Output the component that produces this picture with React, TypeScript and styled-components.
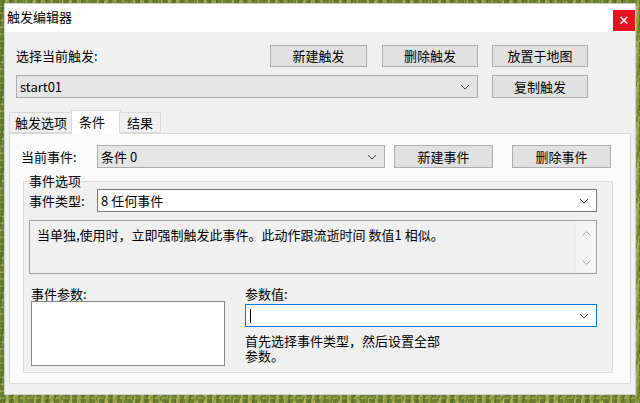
import React from 'react';
import styled, { createGlobalStyle } from 'styled-components';

const GlobalStyle = createGlobalStyle`
  html, body {
    margin: 0;
    padding: 0;
  }
  body {
    width: 640px;
    height: 403px;
    overflow: hidden;
    font-family: "Noto Sans CJK SC", "Liberation Sans", sans-serif;
    font-size: 13px;
    color: #000;
    background-color: #84933a;
    background-image:
      radial-gradient(circle at 20% 30%, rgba(70, 95, 25, 0.55) 0 3px, transparent 4px),
      radial-gradient(circle at 70% 80%, rgba(190, 195, 100, 0.6) 0 2px, transparent 3px),
      repeating-linear-gradient(100deg, #8f9c46 0 3px, #728530 3px 5px, #a5ab5e 5px 7px);
    background-size: 9px 7px, 11px 9px, auto;
  }
`;

const Desktop = styled.div`
  padding: 3px 4px 8px 4px;
`;

const Window = styled.div`
  width: 632px;
  height: 392px;
  display: flex;
  flex-direction: column;
  background: #f0f0f0;
  border: 1px solid #cfcfcf;
  box-sizing: border-box;
`;

const TitleBar = styled.div`
  height: 28px;
  display: flex;
  align-items: center;
  justify-content: space-between;
  background: #ffffff;
  padding-left: 2px;
`;

const Title = styled.span`
  line-height: 16px;
  margin-top: -2px;
`;

const CloseButton = styled.div`
  width: 22px;
  height: 21px;
  margin-top: 6px;
  align-self: flex-start;
  background: #e81123;
  color: #fff;
  display: flex;
  align-items: center;
  justify-content: center;
  font-family: "DejaVu Sans", sans-serif;
  font-size: 13px;
  font-weight: bold;
`;

const Body = styled.div`
  flex: 1;
  padding: 13px 5px 0 3px;
`;

const TopGrid = styled.div`
  display: grid;
  grid-template-columns: 462px 96px;
  column-gap: 14px;
  row-gap: 8px;
  margin-left: 8px;
`;

const LabelRow = styled.div`
  display: flex;
  align-items: center;
  gap: 15px;
`;

const Label = styled.span<{ $w?: number; $grow?: boolean }>`
  line-height: 16px;
  white-space: nowrap;
  flex: ${p => (p.$grow ? 1 : 'none')};
  ${p => (p.$w ? `width: ${p.$w}px;` : '')}
`;

const Button = styled.div<{ $w: number; $h?: number }>`
  width: ${p => p.$w}px;
  height: ${p => p.$h ?? 22}px;
  box-sizing: border-box;
  flex: none;
  display: flex;
  align-items: center;
  justify-content: center;
  background: #e1e1e1;
  border: 1px solid #adadad;
  line-height: 16px;
`;

type ComboKind = 'gray' | 'white' | 'focus';

const ComboBox = styled.div<{ $w?: number; $kind: ComboKind }>`
  ${p => (p.$w ? `width: ${p.$w}px;` : '')}
  height: 23px;
  box-sizing: border-box;
  flex: none;
  display: flex;
  align-items: center;
  padding: 0 7px 0 3px;
  background: ${p => (p.$kind === 'gray' ? '#e5e5e5' : '#ffffff')};
  border: 1px solid
    ${p => (p.$kind === 'gray' ? '#acacac' : p.$kind === 'focus' ? '#0078d7' : '#7a7a7a')};
  line-height: 16px;
`;

const ComboText = styled.span`
  flex: 1;
  white-space: nowrap;
`;

const Caret = styled.span`
  width: 1px;
  height: 14px;
  background: #000;
  margin-left: 1px;
`;

const TabStrip = styled.div`
  display: flex;
  align-items: flex-end;
  margin: 12px 0 0 1px;
  height: 23px;
  position: relative;
  z-index: 1;
`;

const Tab = styled.div<{ $w: number; $active?: boolean }>`
  width: ${p => p.$w}px;
  box-sizing: border-box;
  height: ${p => (p.$active ? 24 : 21)}px;
  margin-bottom: ${p => (p.$active ? -1 : 0)}px;
  ${p => (p.$active ? 'margin-left: -2px; margin-right: -2px; padding-right: 8px;' : '')}
  background: ${p => (p.$active ? '#ffffff' : '#f0f0f0')};
  border: 1px solid #d9d9d9;
  border-bottom: ${p => (p.$active ? 'none' : '1px solid #d9d9d9')};
  display: flex;
  align-items: ${p => (p.$active ? 'flex-start' : 'center')};
  padding-top: ${p => (p.$active ? 3 : 1)}px;
  justify-content: center;
  line-height: 16px;
`;

const TabPanel = styled.div`
  margin-left: 1px;
  width: 622px;
  height: 251px;
  box-sizing: border-box;
  background: #fbfbfb;
  border: 1px solid #d9d9d9;
  padding: 11px 11px 0 11px;
`;

const EventRow = styled.div`
  display: flex;
  align-items: center;
`;

const GroupBox = styled.fieldset`
  margin: 5px 0 0 2px;
  width: 590px;
  height: 200px;
  box-sizing: border-box;
  border: 1px solid #dcdcdc;
  background: #f0f0f0;
  padding: 0 15px 0 5px;
`;

const Legend = styled.legend`
  padding: 0;
  line-height: 16px;
`;

const TypeRow = styled.div`
  display: flex;
  align-items: center;
`;

const Description = styled.div`
  margin-top: 8px;
  height: 54px;
  box-sizing: border-box;
  border: 1px solid #a0a0a0;
  background: #f0f0f0;
  display: flex;
`;

const DescText = styled.div`
  flex: 1;
  padding: 6px 0 0 7px;
  line-height: 16px;
`;

const ScrollTrack = styled.div`
  width: 20px;
  display: flex;
  flex-direction: column;
  justify-content: space-between;
  align-items: center;
  padding: 10px 0 8px;
  background: #f4f4f4;
  border-left: 1px solid #ececec;
`;

const ParamGrid = styled.div`
  display: grid;
  grid-template-columns: 194px 352px;
  column-gap: 20px;
  align-items: start;
  margin: 12px 0 0 2px;
`;

const Column = styled.div`
  display: flex;
  flex-direction: column;
`;

const ListBox = styled.div`
  margin-top: -1px;
  height: 65px;
  box-sizing: border-box;
  background: #ffffff;
  border: 1px solid #828790;
`;

const Help = styled.div`
  margin-top: 6px;
  max-width: 205px;
  line-height: 15px;
`;

const Chevron = ({ color = '#444' }: { color?: string }) => (
  <svg width="10" height="6" viewBox="0 0 10 6">
    <path d="M1 1 L5 5 L9 1" fill="none" stroke={color} strokeWidth="1" />
  </svg>
);

const ArrowUp = () => (
  <svg width="9" height="5" viewBox="0 0 9 5">
    <path d="M0.5 4.5 L4.5 0.5 L8.5 4.5" fill="none" stroke="#a3a3a3" strokeWidth="1" />
  </svg>
);

const ArrowDown = () => (
  <svg width="9" height="5" viewBox="0 0 9 5">
    <path d="M0.5 0.5 L4.5 4.5 L8.5 0.5" fill="none" stroke="#a3a3a3" strokeWidth="1" />
  </svg>
);

export default function App() {
  return (
    <>
      <GlobalStyle />
      <Desktop>
        <Window>
          <TitleBar>
            <Title>触发编辑器</Title>
            <CloseButton>✕</CloseButton>
          </TitleBar>
          <Body>
            <TopGrid>
              <LabelRow>
                <Label $grow>选择当前触发:</Label>
                <Button $w={97}>新建触发</Button>
                <Button $w={96}>删除触发</Button>
              </LabelRow>
              <Button $w={96}>放置于地图</Button>
              <ComboBox $kind="gray">
                <ComboText>start01</ComboText>
                <Chevron />
              </ComboBox>
              <Button $w={96} $h={23}>复制触发</Button>
            </TopGrid>

            <TabStrip>
              <Tab $w={64}>触发选项</Tab>
              <Tab $w={50} $active>条件</Tab>
              <Tab $w={42}>结果</Tab>
            </TabStrip>
            <TabPanel>
              <EventRow>
                <Label $w={76}>当前事件:</Label>
                <ComboBox $kind="gray" $w={288}>
                  <ComboText>条件 0</ComboText>
                  <Chevron />
                </ComboBox>
                <Button $w={99} $h={23} style={{ marginLeft: 9 }}>新建事件</Button>
                <Button $w={99} $h={23} style={{ marginLeft: 19 }}>删除事件</Button>
              </EventRow>

              <GroupBox>
                <Legend>事件选项</Legend>
                <TypeRow>
                  <Label $w={68}>事件类型:</Label>
                  <ComboBox $kind="white" $w={500}>
                    <ComboText>8 任何事件</ComboText>
                    <Chevron />
                  </ComboBox>
                </TypeRow>
                <Description>
                  <DescText>当单独,使用时，立即强制触发此事件。此动作跟流逝时间 数值1 相似。</DescText>
                  <ScrollTrack>
                    <ArrowUp />
                    <ArrowDown />
                  </ScrollTrack>
                </Description>
                <ParamGrid>
                  <Column>
                    <Label>事件参数:</Label>
                    <ListBox />
                  </Column>
                  <Column>
                    <Label>参数值:</Label>
                    <ComboBox $kind="focus" style={{ marginTop: 2, width: 352 }}>
                      <Caret />
                      <ComboText />
                      <Chevron />
                    </ComboBox>
                    <Help>首先选择事件类型，然后设置全部参数。</Help>
                  </Column>
                </ParamGrid>
              </GroupBox>
            </TabPanel>
          </Body>
        </Window>
      </Desktop>
    </>
  );
}
